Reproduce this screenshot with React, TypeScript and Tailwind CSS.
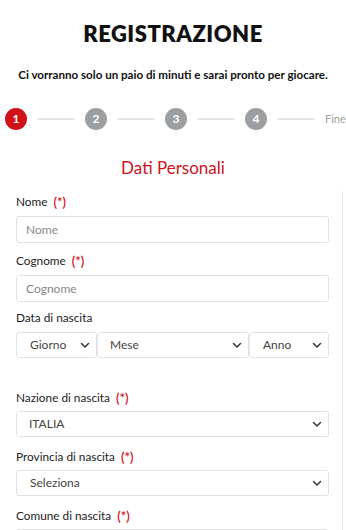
import React from "react";

const font = { fontFamily: "Lato, 'Open Sans', sans-serif" };

function Chevron() {
  return (
    <svg width="10" height="10" viewBox="0 0 10 10" className="shrink-0">
      <path d="M1.5 3.5 L5 7 L8.5 3.5" fill="none" stroke="#333" strokeWidth="1.5" strokeLinecap="round" strokeLinejoin="round" />
    </svg>
  );
}

function Label({ text, req }: { text: string; req?: boolean }) {
  return (
    <div className="h-[18px] flex items-center text-[11.8px] text-[#222] leading-none">
      <span>{text}</span>
      {req && <span className="ml-[6px] text-[#d0121b] text-[13px] font-semibold">(*)</span>}
    </div>
  );
}

function Select({ text, className }: { text: string; className?: string }) {
  return (
    <div className={"h-[26px] border border-[#e2e2e2] rounded-[3px] bg-white flex items-center justify-between pl-[12px] pr-[6px] text-[12px] text-[#444] " + (className || "")}>
      <span>{text}</span>
      <Chevron />
    </div>
  );
}

function Step({ n, active }: { n: number; active?: boolean }) {
  return (
    <div className={"w-[22px] h-[22px] rounded-full flex items-center justify-center text-white text-[12px] font-bold shrink-0 " + (active ? "bg-[#d0121b]" : "bg-[#9c9fa1]")}>
      {n}
    </div>
  );
}

function Line() {
  return <div className="h-[2px] w-[36px] bg-[#e4e4e4] mx-[11px]" />;
}

export default function App() {
  return (
    <div style={font} className="w-[346px] h-[530px] overflow-hidden bg-white">
      <h1 className="pt-[21px] text-center text-[22px] font-extrabold tracking-[0.5px] text-[#111] leading-[26px]">REGISTRAZIONE</h1>
      <p className="mt-[21px] text-center text-[11.6px] font-bold text-[#111] leading-[14px]">
        Ci vorranno solo un paio di minuti e sarai pronto per giocare.
      </p>
      <div className="mt-[26px] flex items-center pl-[5px] h-[22px]">
        <Step n={1} active />
        <Line />
        <Step n={2} />
        <Line />
        <Step n={3} />
        <Line />
        <Step n={4} />
        <Line />
        <span className="text-[11px] text-[#a0a0a0]">Fine</span>
      </div>
      <h2 className="mt-[27px] text-center text-[17px] text-[#d0121b] leading-[22px]">Dati Personali</h2>
      <div className="mt-[12px] w-[343px] border-r border-[#e6e6e6] pl-[16px] pr-[13px] pt-[2px] h-[400px]">
        <Label text="Nome" req />
        <div className="mt-[5px] h-[27px] border border-[#e2e2e2] rounded-[3px] flex items-center pl-[9px] text-[12px] text-[#888]">Nome</div>
        <div className="mt-[9px]"><Label text="Cognome" req /></div>
        <div className="mt-[5px] h-[27px] border border-[#e2e2e2] rounded-[3px] flex items-center pl-[9px] text-[12px] text-[#888]">Cognome</div>
        <div className="mt-[7px]"><Label text="Data di nascita" /></div>
        <div className="mt-[5px] flex">
          <Select text="Giorno" className="w-[81px] pl-[13px]" />
          <Select text="Mese" className="w-[152px] pl-[12px]" />
          <Select text="Anno" className="w-[80px] pl-[13px]" />
        </div>
        <div className="mt-[31px]"><Label text="Nazione di nascita" req /></div>
        <Select text="ITALIA" className="mt-[4px] pl-[12px]" />
        <div className="mt-[11px]"><Label text="Provincia di nascita" req /></div>
        <Select text="Seleziona" className="mt-[4px] pl-[13px]" />
        <div className="mt-[11px]"><Label text="Comune di nascita" req /></div>
        <div className="mt-[4px] h-[26px] border border-[#e2e2e2] rounded-[3px] bg-[#f2f2f2]" />
      </div>
    </div>
  );
}
